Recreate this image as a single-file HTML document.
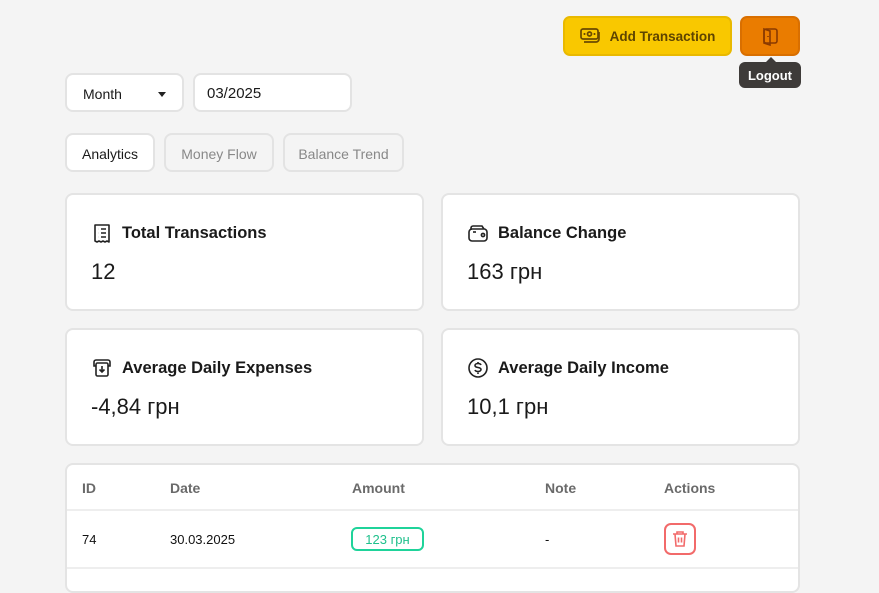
<!DOCTYPE html>
<html><head><meta charset="utf-8"><style>
*{box-sizing:border-box;margin:0;padding:0}
body{width:879px;height:575px;background:#f4f4f4;font-family:"Liberation Sans",sans-serif;position:relative;overflow:hidden;color:#1a1a1a}
.a{position:absolute}
.box{background:#fff;border:2px solid #e3e3e3;border-radius:8px}
.card{background:#fff;border:2px solid #e4e4e4;border-radius:8px}
.ct{position:absolute;left:24px;top:27px;font-size:16.5px;font-weight:bold;display:flex;align-items:center;gap:9px;color:#1a1a1a}
.cv{position:absolute;left:24px;top:64px;font-size:22px;color:#1a1a1a}
.th{font-size:14px;font-weight:bold;color:#6a6a6a;top:480px}
.td{font-size:13px;color:#111;top:532px}
</style></head><body>
<div class="a" style="left:563px;top:16px;width:169px;height:40px;background:#f9c800;border:2px solid #e9b900;border-radius:7px;display:flex;align-items:center;justify-content:center;gap:8px;font-size:13.5px;font-weight:bold;color:#5e4400">
<svg width="22" height="18" viewBox="0 0 22 18" fill="none" stroke="#6b4a00" stroke-width="1.7"><rect x="1" y="2" width="17" height="10" rx="2"/><circle cx="9.5" cy="7" r="2"/><path d="M4.5 6v2M14.5 6v2"/><path d="M4 15h12a3 3 0 0 0 3-3V5"/></svg>Add Transaction</div>
<div class="a" style="left:740px;top:16px;width:60px;height:40px;background:#ea7c00;border:2px solid #d96f00;border-radius:7px;display:flex;align-items:center;justify-content:center">
<svg width="20" height="20" viewBox="0 0 20 20" fill="none" stroke="#8a3a00" stroke-width="1.6"><rect x="4" y="3" width="13" height="14" rx="2"/><path d="M4 3l6 2v14l-6-2z"/><path d="M8 10v1"/></svg></div>
<div class="a" style="left:766px;top:57px;width:0;height:0;border-left:5px solid transparent;border-right:5px solid transparent;border-bottom:5px solid #3e3b39"></div>
<div class="a" style="left:739px;top:62px;width:62px;height:26px;background:#3e3b39;border-radius:6px;color:#fff;font-size:13px;font-weight:bold;display:flex;align-items:center;justify-content:center">Logout</div>

<div class="a box" style="left:65px;top:73px;width:119px;height:39px;font-size:14px;padding:11px 0 0 16px">Month<span class="a" style="left:91px;top:17px;border-left:4px solid transparent;border-right:4px solid transparent;border-top:5px solid #222"></span></div>
<div class="a box" style="left:193px;top:73px;width:159px;height:39px;font-size:15px;padding:10px 0 0 12px">03/2025</div>

<div class="a box" style="left:65px;top:133px;width:90px;height:39px;font-size:14px;text-align:center;padding-top:11px">Analytics</div>
<div class="a" style="left:164px;top:133px;width:110px;height:39px;border:2px solid #e3e3e3;border-radius:8px;font-size:14px;color:#888;text-align:center;padding-top:11px">Money Flow</div>
<div class="a" style="left:283px;top:133px;width:121px;height:39px;border:2px solid #e3e3e3;border-radius:8px;font-size:14px;color:#888;text-align:center;padding-top:11px">Balance Trend</div>

<div class="a card" style="left:65px;top:193px;width:359px;height:118px">
<div class="ct"><svg width="22" height="22" viewBox="0 0 22 22" fill="none" stroke="#222" stroke-width="1.6"><path d="M4 3h14v17l-2-1-2 1-2-1-2 1-2-1-2 1-2-1z" stroke-linejoin="round"/><path d="M7 7h.1M7 11h.1M7 15h.1M10 7h5M10 11h5M10 15h5"/></svg>Total Transactions</div>
<div class="cv">12</div></div>
<div class="a card" style="left:441px;top:193px;width:359px;height:118px">
<div class="ct"><svg width="22" height="22" viewBox="0 0 22 22" fill="none" stroke="#222" stroke-width="1.6"><path d="M4 8V6a2 2 0 0 1 2-2h9l2 3"/><rect x="2" y="7" width="18" height="12" rx="3"/><circle cx="16" cy="13" r="1.6"/><path d="M6 10h3"/></svg>Balance Change</div>
<div class="cv">163 грн</div></div>
<div class="a card" style="left:65px;top:328px;width:359px;height:118px">
<div class="ct"><svg width="22" height="22" viewBox="0 0 22 22" fill="none" stroke="#222" stroke-width="1.6"><path d="M5 9H3V5a2 2 0 0 1 2-2h12a2 2 0 0 1 2 2v4h-2"/><rect x="5" y="6" width="12" height="13" rx="1.5"/><path d="M11 9v6M8.5 12.5L11 15l2.5-2.5"/></svg>Average Daily Expenses</div>
<div class="cv">-4,84 грн</div></div>
<div class="a card" style="left:441px;top:328px;width:359px;height:118px">
<div class="ct"><svg width="22" height="22" viewBox="0 0 22 22" fill="none" stroke="#222" stroke-width="1.6"><circle cx="11" cy="11" r="9"/><path d="M14 8a3 2 0 0 0-3-1.5c-2 0-3 1-3 2s1 1.7 3 2 3 1 3 2-1 2-3 2a3 2 0 0 1-3-1.5M11 5v2M11 15.5V17"/></svg>Average Daily Income</div>
<div class="cv">10,1 грн</div></div>

<div class="a card" style="left:65px;top:463px;width:735px;height:130px"></div>
<div class="a" style="left:67px;top:509px;width:731px;height:2px;background:#eee"></div>
<div class="a" style="left:67px;top:567px;width:731px;height:2px;background:#eee"></div>
<div class="a th" style="left:82px">ID</div>
<div class="a th" style="left:170px">Date</div>
<div class="a th" style="left:352px">Amount</div>
<div class="a th" style="left:545px">Note</div>
<div class="a th" style="left:664px">Actions</div>
<div class="a td" style="left:82px">74</div>
<div class="a td" style="left:170px">30.03.2025</div>
<div class="a" style="left:351px;top:527px;width:73px;height:24px;border:2px solid #1fd39a;border-radius:6px;color:#1fc08c;font-size:13px;text-align:center;padding-top:3px">123 грн</div>
<div class="a td" style="left:545px">-</div>
<div class="a" style="left:664px;top:523px;width:32px;height:32px;border:2px solid #f26a6a;border-radius:7px;display:flex;align-items:center;justify-content:center">
<svg width="20" height="20" viewBox="0 0 20 20" fill="none" stroke="#f26a6a" stroke-width="1.6"><path d="M3 5h14M7 5V3h6v2M5 5l1 12h8l1-12M8.5 8.5v5M11.5 8.5v5"/></svg></div>
</body></html>
